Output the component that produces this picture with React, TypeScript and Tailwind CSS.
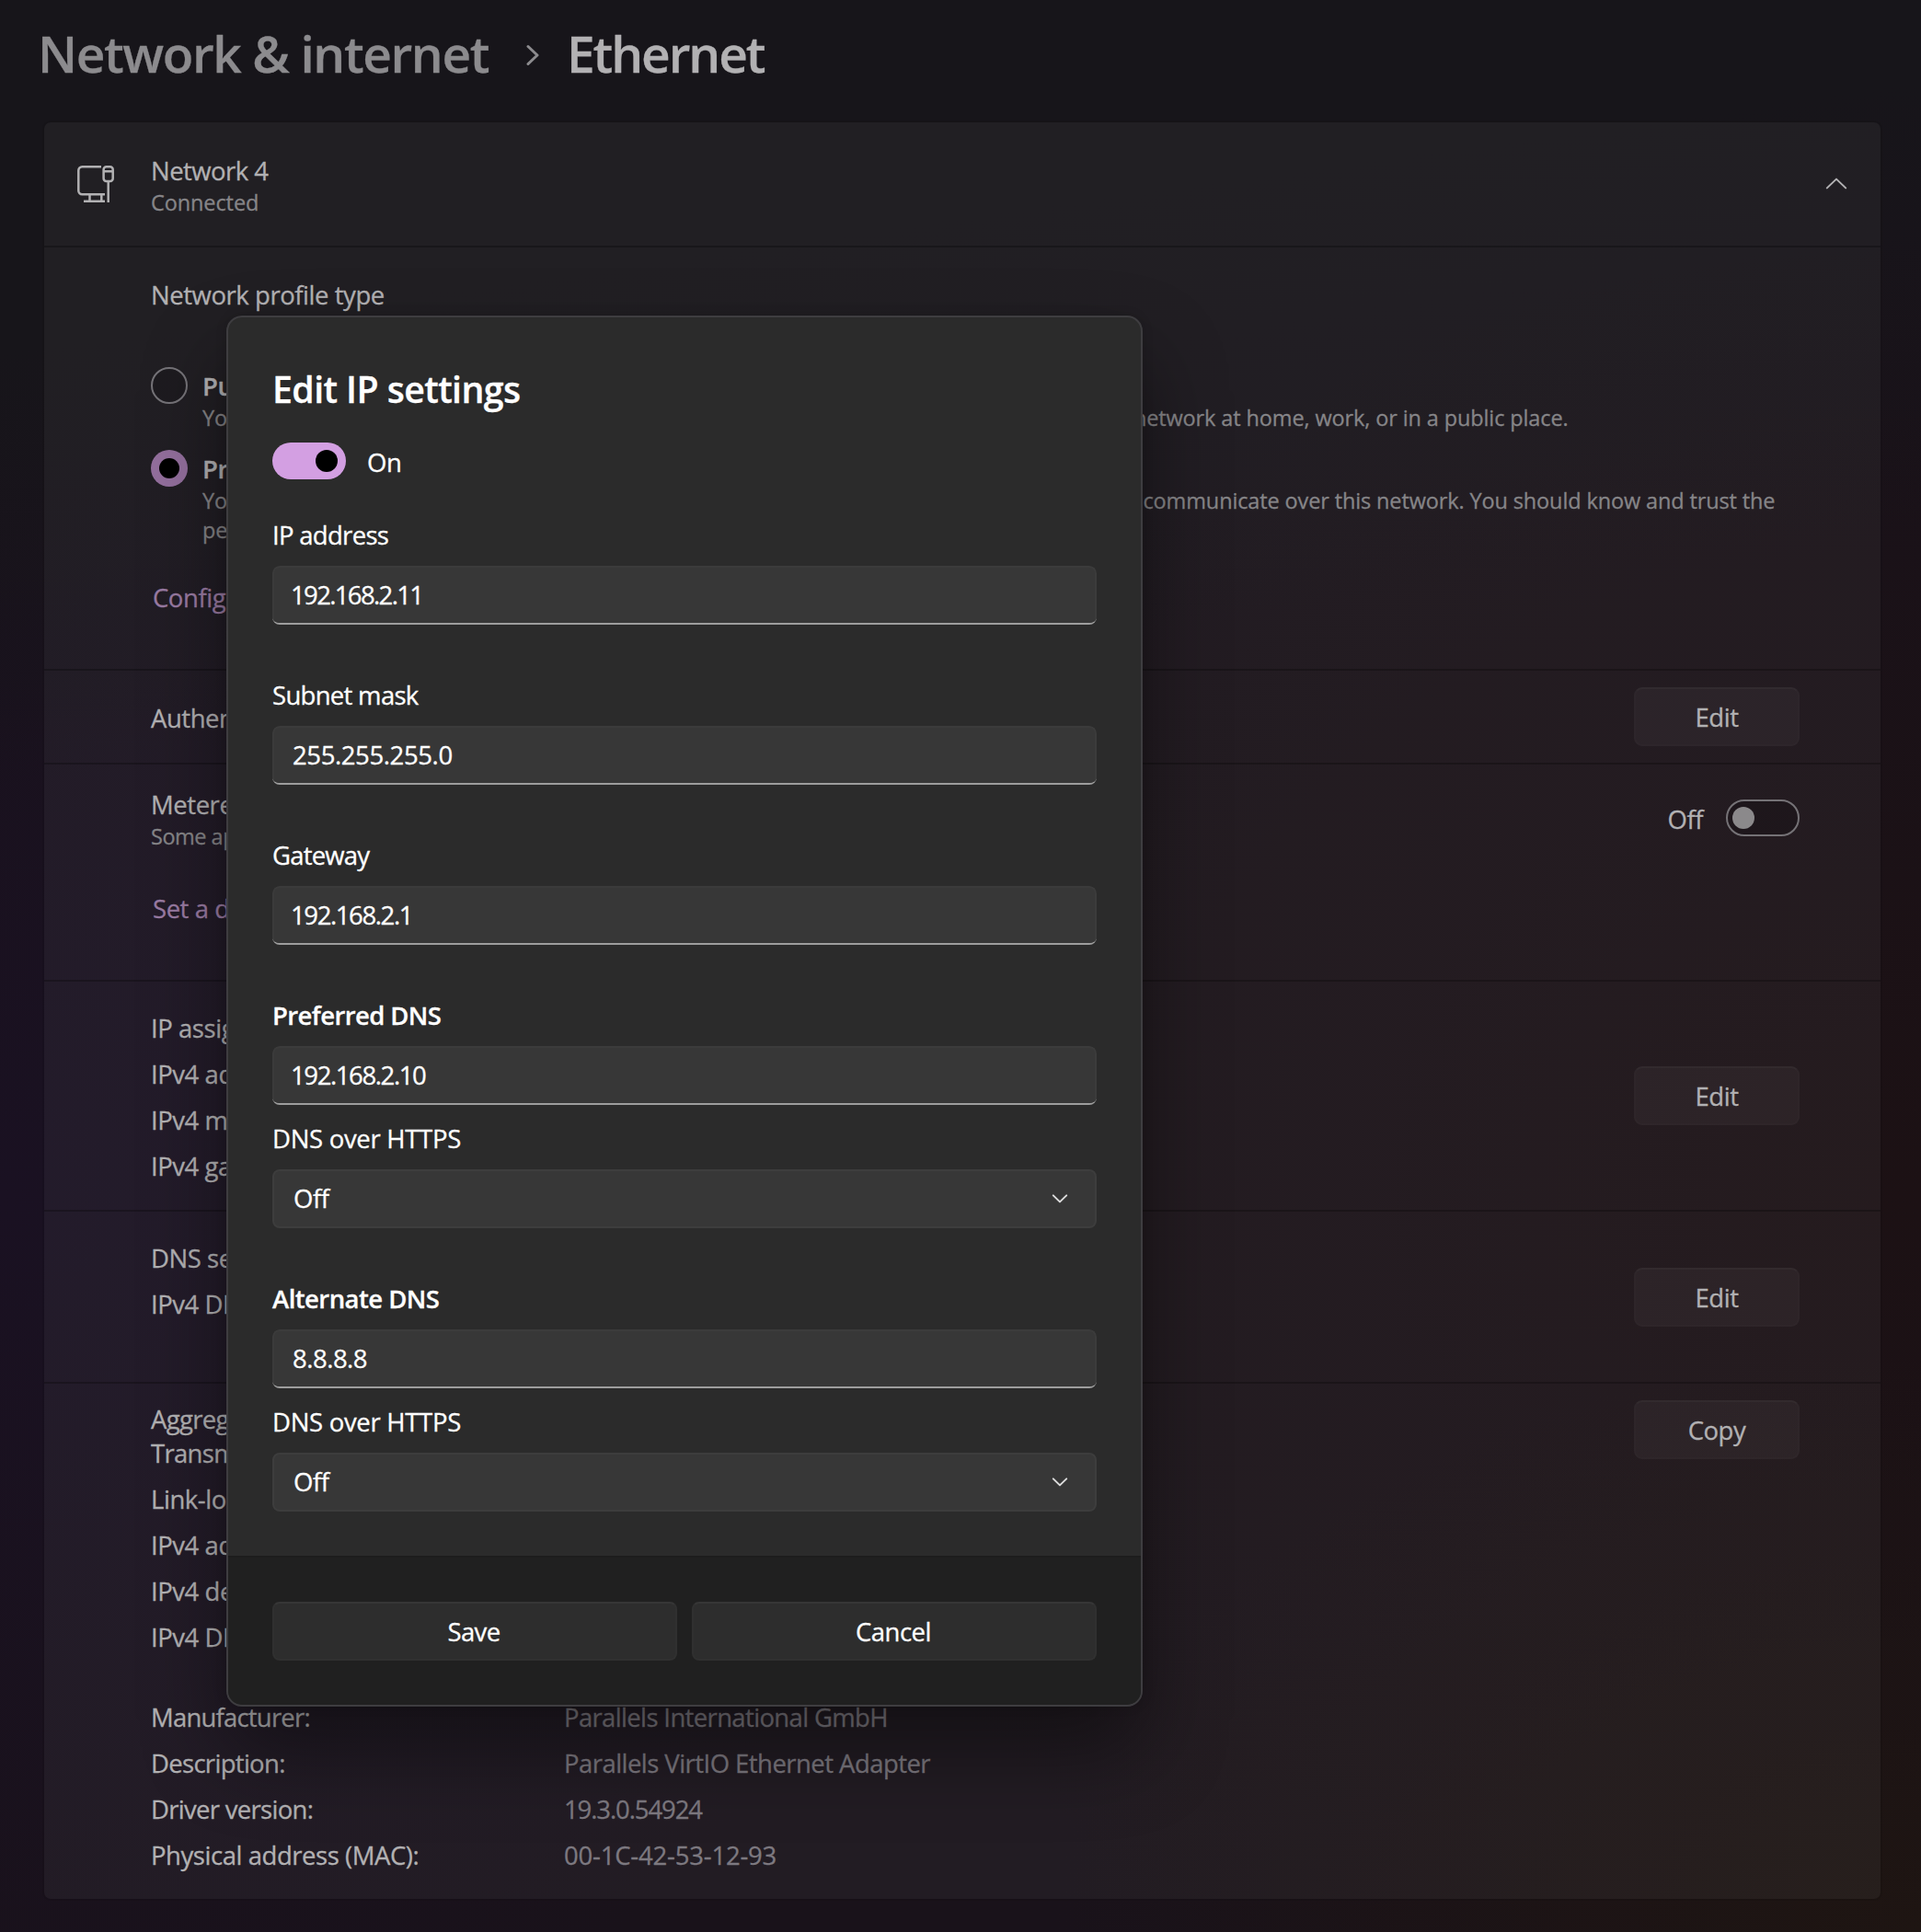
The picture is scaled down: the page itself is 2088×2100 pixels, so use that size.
import type { ReactNode } from 'react';

function Row({ label, value, labelClass = '', valueClass = '' }: { label: string; value?: string; labelClass?: string; valueClass?: string }) {
  return (
    <div className="flex h-[50px] leading-[50px]">
      <span className={`w-[449px] whitespace-nowrap ${labelClass}`}>{label}</span>
      {value && <span className={`text-[#7d7980] whitespace-nowrap ${valueClass}`}>{value}</span>}
    </div>
  );
}

function CardButton({ children, className = '' }: { children: string; className?: string }) {
  return (
    <button
      className={`h-16 w-[180px] shrink-0 rounded-[9px] border-2 border-white/[0.012] border-t-white/[0.03] bg-white/[0.04] bg-clip-border pt-[2px] text-center text-[27.5px] leading-[36px] ${className}`}
    >
      {children}
    </button>
  );
}

function Section({ className = '', children }: { className?: string; children: ReactNode }) {
  return <section className={`box-border flex justify-between border-t-2 border-black/25 bg-clip-padding pl-[116px] pr-[88px] ${className}`}>{children}</section>;
}

function ChevronDown() {
  return (
    <svg className="h-[12px] w-[20px]" viewBox="0 0 20 12" fill="none" stroke="#dcdcdc" strokeWidth="2" strokeLinecap="round" strokeLinejoin="round">
      <path d="M2.8 2.4 10 9.4 17.2 2.4" />
    </svg>
  );
}

function TextField({ value, className }: { value: string; className: string }) {
  return (
    <div className="h-16 overflow-hidden rounded-[8px] border-b-2 border-b-[#9d9d9d]">
      <div className={`h-[62px] rounded-t-[8px] border-2 border-b-0 border-[#3b3b3b] bg-[#373737] text-[27.5px] leading-[60px] ${className}`}>{value}</div>
    </div>
  );
}

function SelectField({ value }: { value: string }) {
  return (
    <div className="flex h-16 items-center justify-between rounded-[8px] border-2 border-[#3d3d3d] bg-[#373737] pl-[21px] pr-[28px] text-[27.5px] leading-[36px]">
      <span>{value}</span>
      <ChevronDown />
    </div>
  );
}

function Label({ children, className = '' }: { children: string; className?: string }) {
  return <div className={`h-9 whitespace-nowrap text-[27.5px] leading-[38px] ${className}`}>{children}</div>;
}

function Dialog() {
  return (
    <div className="absolute left-[246px] top-[343px] flex h-[1512px] w-[996px] flex-col overflow-hidden rounded-[17px] border-2 border-[#3e3d40] bg-[#2b2b2b] text-white">
      <div className="h-[1348px] border-b-2 border-[#1d1d1d] px-12 pt-[52px]">
        <h2 className="h-[52px] whitespace-nowrap text-[39.3px] font-semibold leading-[52px] tracking-[-0.6px]">Edit IP settings</h2>
        <div className="mt-[32px] flex h-10">
          <div className="flex h-10 w-20 items-center justify-end rounded-full bg-[#d39fe2] pr-[9px]">
            <div className="h-6 w-6 rounded-full bg-black" />
          </div>
          <span className="ml-[23px] pt-[4px] text-[27.5px] leading-[36px]">On</span>
        </div>
        <Label className="mt-[42px] tracking-[-0.7px]">IP address</Label>
        <div className="mt-[16px]"><TextField value="192.168.2.11" className="pl-[18px] tracking-[-1.65px]" /></div>
        <Label className="mt-[58px] tracking-[-0.7px]">Subnet mask</Label>
        <div className="mt-[16px]"><TextField value="255.255.255.0" className="pl-[20px] tracking-[-0.4px]" /></div>
        <Label className="mt-[58px] tracking-[-0.8px]">Gateway</Label>
        <div className="mt-[16px]"><TextField value="192.168.2.1" className="pl-[18px] tracking-[-1.4px]" /></div>
        <Label className="mt-[58px] font-semibold tracking-[-0.6px]">Preferred DNS</Label>
        <div className="mt-[16px]"><TextField value="192.168.2.10" className="pl-[18px] tracking-[-1.4px]" /></div>
        <Label className="mt-[18px] tracking-[-0.3px]">DNS over HTTPS</Label>
        <div className="mt-[16px]"><SelectField value="Off" /></div>
        <Label className="mt-[58px] font-semibold tracking-[-0.55px]">Alternate DNS</Label>
        <div className="mt-[16px]"><TextField value="8.8.8.8" className="pl-[20px] tracking-[-0.5px]" /></div>
        <Label className="mt-[18px] tracking-[-0.3px]">DNS over HTTPS</Label>
        <div className="mt-[16px]"><SelectField value="Off" /></div>
      </div>
      <div className="grid grow grid-cols-2 content-start gap-4 bg-[#202020] px-12 pt-[48px]">
        <button className="h-16 rounded-[8px] border-2 border-[#303030] border-t-[#363636] bg-[#2d2d2d] pr-[2px] pt-[2px] text-[27.5px] leading-[36px] tracking-[-0.6px]">Save</button>
        <button className="h-16 rounded-[8px] border-2 border-[#303030] border-t-[#363636] bg-[#2d2d2d] pr-[2px] pt-[2px] text-[27.5px] leading-[36px] tracking-[-0.5px]">Cancel</button>
      </div>
    </div>
  );
}

export default function App() {
  return (
    <div className="relative h-[2100px] w-[2088px] overflow-hidden bg-[#19121a] bg-[radial-gradient(ellipse_45%_30%_at_100%_100%,#1e1512_0%,transparent_100%),linear-gradient(172deg,#17151a_0%,#17151a_16%,transparent_36%),radial-gradient(ellipse_60%_50%_at_100%_62%,#1c1114_0%,transparent_100%),radial-gradient(ellipse_50%_50%_at_0%_62%,#1a1122_0%,transparent_100%)] font-['Open_Sans','Noto_Sans',sans-serif] text-[27.5px] tracking-[-0.45px] text-[#b2b1b3] [-webkit-text-stroke-width:0.3px]">
      <header className="flex h-[133px] items-start pl-[41px] pt-[28px] text-[55px] font-semibold leading-[60px]">
        <span className="w-[531px] whitespace-nowrap tracking-[-1.4px] text-[#8c8b8e]">Network &amp; internet</span>
        <svg className="mt-[19px] h-[26px] w-[16px]" viewBox="0 0 16 26" fill="none" stroke="#8c8b8e" strokeWidth="3" strokeLinecap="round" strokeLinejoin="round">
          <path d="M2 3.5 12 13 2 22.5" />
        </svg>
        <span className="ml-[28px] tracking-[-2.1px]">Ethernet</span>
      </header>

      <main className="mx-[44px] ml-[48px] h-[1931px] overflow-hidden rounded-[7px] bg-white/[0.042] shadow-[0_0_0_2px_rgba(0,0,0,0.08)]">
        <div className="flex h-[134px]">
          <svg className="ml-[36px] mt-[47px] h-10 w-10" viewBox="0 0 40 40" fill="none" stroke="#b2b1b3" strokeWidth="2.5">
            <path d="M26 1.3H5.3a4 4 0 0 0-4 4v21.9a4 4 0 0 0 4 4H30" />
            <path d="M13.5 31.2v7.5M26.3 31.2v7.5M7 38.7h23M33.7 17.5V40M28.6 6.2h10.1" />
            <rect x="28.6" y="1.3" width="10.1" height="15.7" rx="3" />
          </svg>
          <div className="ml-[40px] pt-[35px]">
            <div className="leading-[36px] tracking-[-0.55px]">Network 4</div>
            <div className="text-[23.5px] leading-[32px] tracking-[-0.1px] text-[#868588]">Connected</div>
          </div>
          <svg className="ml-auto mr-[35px] mt-[59px] h-[15px] w-[26px]" viewBox="0 0 26 15" fill="none" stroke="#b2b1b3" strokeWidth="2" strokeLinecap="round" strokeLinejoin="round">
            <path d="M2.8 12.4 13 2.6 23.2 12.4" />
          </svg>
        </div>

        <Section className="h-[460px]">
          <div className="pt-[34px]">
            <div className="leading-[36px]">Network profile type</div>
            <div className="mt-[60px] flex h-[90px]">
              <div className="h-10 w-10 rounded-full border-2 border-[#757378] bg-black/10" />
              <div className="ml-[15px] whitespace-nowrap pt-[3px]">
                <div className="ml-px font-semibold leading-[36px]">Public network (Recommended)</div>
                <div className="ml-px text-[23.5px] leading-[32px] tracking-[-0.12px] text-[#868588]">
                  Your device is not discoverable on the network. Use this in most cases—when connected to a network at home, work, or in a public place.
                </div>
              </div>
            </div>
            <div className="flex">
              <div className="flex h-10 w-10 shrink-0 items-center justify-center rounded-full bg-[#936f9d]">
                <div className="h-[22px] w-[22px] rounded-full bg-black" />
              </div>
              <div className="ml-[15px] whitespace-nowrap pt-[3px]">
                <div className="ml-px font-semibold leading-[36px]">Private network</div>
                <div className="ml-px text-[23.5px] leading-[32px] tracking-[-0.13px] text-[#868588]">
                  Your device is discoverable on the network. Select this if you need file sharing or use apps that communicate over this network. You should know and trust the
                  <br />
                  people and devices on the network.
                </div>
              </div>
            </div>
            <div className="ml-[2px] mt-[40px] leading-[36px] text-[#9a7ba3]">Configure firewall and security settings</div>
          </div>
        </Section>

        <Section className="h-[102px] items-center">
          <div className="pt-[3px] leading-[36px]">Authentication settings</div>
          <CardButton>Edit</CardButton>
        </Section>

        <Section className="h-[236px]">
          <div className="pt-[26px]">
            <div className="leading-[36px]">Metered connection</div>
            <div className="whitespace-nowrap text-[23.5px] leading-[32px] tracking-[-0.5px] text-[#868588]">Some apps might work differently to reduce data usage when you're connected to this network</div>
            <div className="ml-[2px] mt-[45px] leading-[36px] text-[#9a7ba3]">Set a data limit to help control data usage on this network</div>
          </div>
          <div className="flex pt-[38px]">
            <span className="mr-[25px] pt-[4px] leading-[36px]">Off</span>
            <div className="flex h-10 w-20 items-center rounded-full border-2 border-[#757276] bg-black/15 pl-[5px]">
              <div className="h-6 w-6 rounded-full bg-[#8b898b]" />
            </div>
          </div>
        </Section>

        <Section className="h-[250px]">
          <div className="pt-[26px]">
            <Row label="IP assignment:" value="Manual" />
            <Row label="IPv4 address:" value="192.168.2.11" />
            <Row label="IPv4 mask:" value="255.255.255.0" />
            <Row label="IPv4 gateway:" value="192.168.2.1" />
          </div>
          <CardButton className="mt-[92px]">Edit</CardButton>
        </Section>

        <Section className="h-[187px]">
          <div className="pt-[26px]">
            <Row label="DNS server assignment:" value="Manual" />
            <Row label="IPv4 DNS servers:" value="192.168.2.10" />
          </div>
          <CardButton className="mt-[61px]">Edit</CardButton>
        </Section>

        <Section className="h-[562px]">
          <div className="pt-[20px]">
            <div className="flex leading-[37px]">
              <div className="w-[449px] tracking-[-0.7px]">Aggregated link speed (Receive/<br />Transmit):</div>
              <div className="text-[#7d7980]">10/10 (Gbps)</div>
            </div>
            <div className="mt-[7px]">
              <Row label="Link-local IPv6 address:" value="fe80::1%4" />
              <Row label="IPv4 address:" value="192.168.2.11" />
              <Row label="IPv4 default gateway:" value="192.168.2.1" />
              <Row label="IPv4 DNS servers:" value="192.168.2.10" />
            </div>
            <div className="mt-[37px]">
              <Row label="Manufacturer:" labelClass="tracking-[-0.8px]" value="Parallels International GmbH" valueClass="tracking-[-0.65px]" />
              <Row label="Description:" labelClass="tracking-[-0.7px]" value="Parallels VirtIO Ethernet Adapter" valueClass="tracking-[-0.55px]" />
              <Row label="Driver version:" labelClass="tracking-[-0.7px]" value="19.3.0.54924" valueClass="tracking-[-1.1px]" />
              <Row label="Physical address (MAC):" value="00-1C-42-53-12-93" valueClass="tracking-[-0.2px]" />
            </div>
          </div>
          <CardButton className="mt-[18px]">Copy</CardButton>
        </Section>
      </main>

      <div className="absolute left-[246px] top-[343px] h-[1512px] w-[996px] rounded-[17px] shadow-[0_48px_90px_rgba(0,0,0,0.42),0_0_12px_rgba(0,0,0,0.15)]" />
      <Dialog />
    </div>
  );
}
